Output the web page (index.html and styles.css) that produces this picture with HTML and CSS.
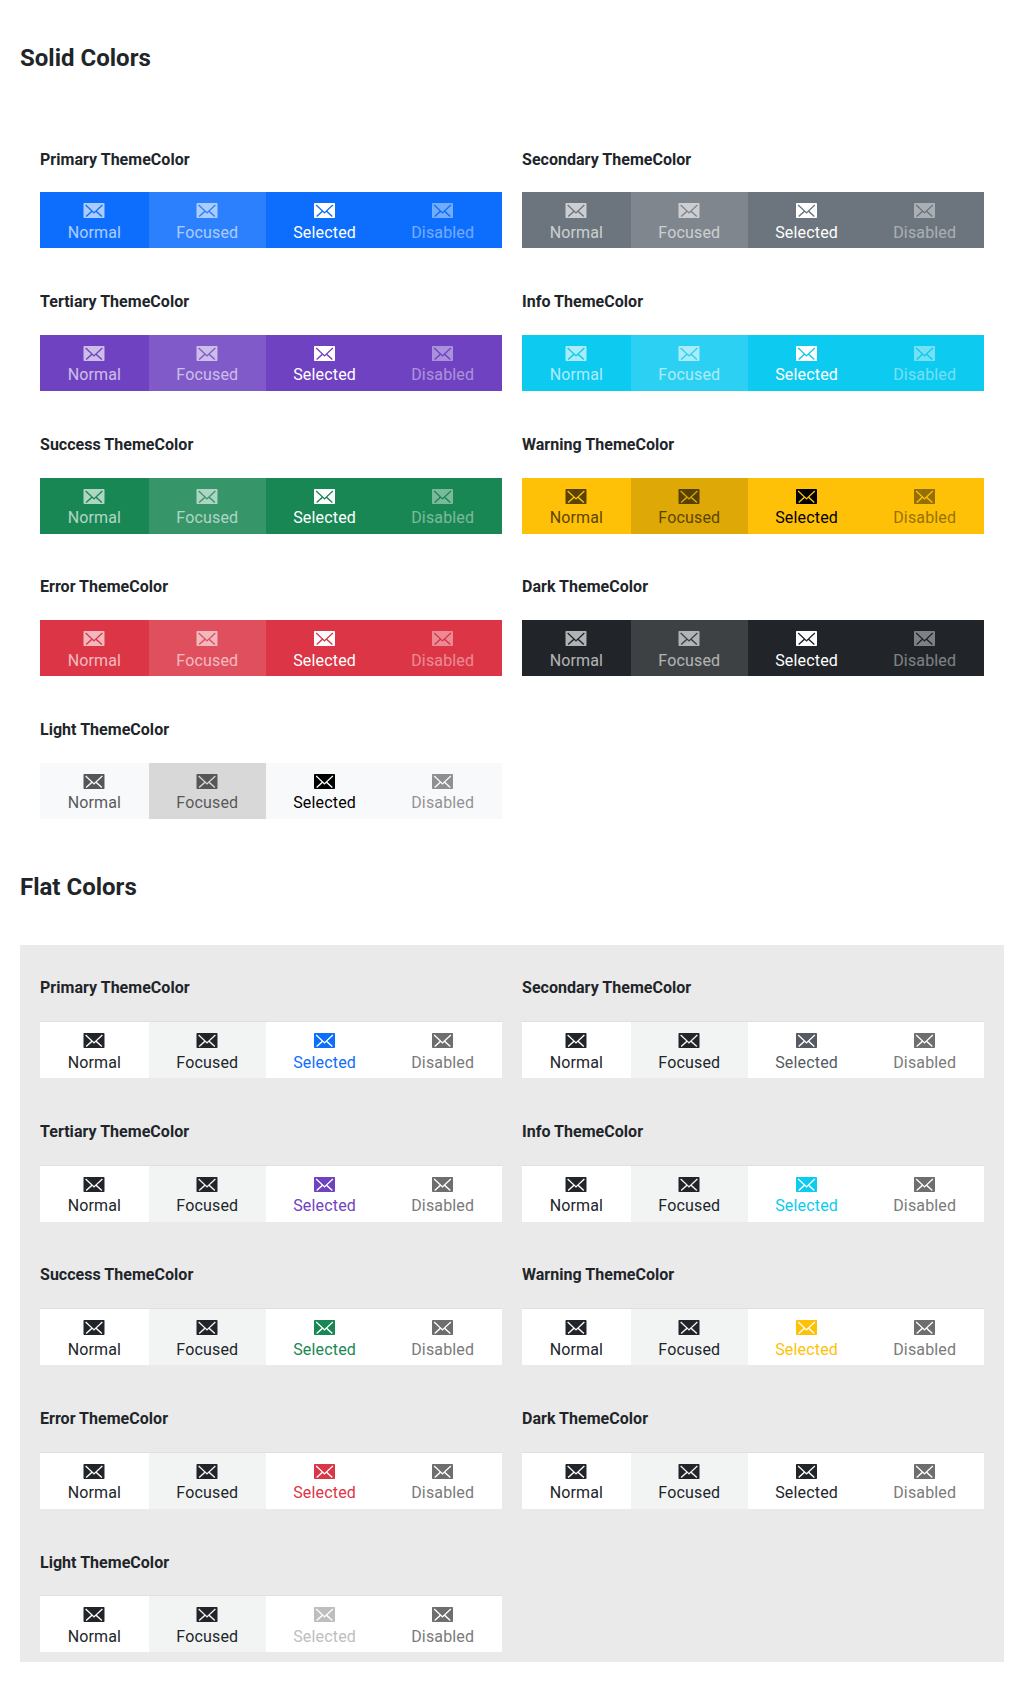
FILE: index.html
```html
<!DOCTYPE html>
<html lang="en">
<head>
<meta charset="utf-8">
<title>Bottom navigation</title>
<link rel="stylesheet" href="styles.css">
</head>
<body>
<h2 class="title">Solid Colors</h2>
<section class="grid solid"></section>
<h2 class="title">Flat Colors</h2>
<section class="grid flat"></section>
<script src="app.js"></script>
</body>
</html>
```
FILE: styles.css
```css
*{box-sizing:border-box}
body{margin:0;padding:44px 20px 0;background:#fff;color:#212529;font:16px/24px Roboto,sans-serif;height:1682px;overflow:hidden}
.title{margin:0;font-size:24px;line-height:28px;font-weight:700}
.grid{display:grid;grid-template-columns:462px 462px;column-gap:20px;padding:20px 20px 10px}
.solid{margin-top:45.6px;margin-bottom:43px;grid-template-rows:repeat(4,142.6px) 112px}
.flat{margin-top:44px;padding-top:21.2px;background:#eaeaea;grid-template-rows:repeat(4,143.6px) 111.4px}
.card{padding-top:10px}
.name{margin:0 0 20.8px;font-size:16px;line-height:24px;font-weight:700;letter-spacing:.03px}
.bar{display:flex;height:56px}
.flat .bar{height:57px;border-top:1px solid #dee0e0;background:#fff}
.item{flex:1 1 auto;display:flex;flex-direction:column;align-items:center;padding:8px 0 0;min-width:0}
.item.normal{flex:0 0 108.8px}
.item.focused{flex:0 0 117px}
.item.selected{flex:0 0 117.6px}
.icon{display:block;width:24px;height:20px;fill:currentColor}
.selected .icon,.disabled .icon{margin-left:.8px}
.selected path,.disabled path{transform:translateX(-.5px)}
.label{margin-top:.4px;line-height:24px;letter-spacing:.16px}
.flat .label{margin-top:.6px}

.solid .bar{background:var(--theme);color:#fff}
.solid .dark-text{color:#000}
.solid .normal>*{opacity:.65}
.solid .focused>*{opacity:.6}
.solid .disabled>*{opacity:.42}
.solid .focused{background:rgba(255,255,255,.13)}
.solid .dark-text .focused{background:rgba(0,0,0,.13)}

.flat .focused{background:#f2f4f4}
.flat .selected{color:var(--theme)}
.flat .disabled{color:#7a7a7a}
.flat .disabled .icon{color:#6e6e6e}
```
FILE: app.js
```js
const themes = [
  ['Primary', '#0d6efd'], ['Secondary', '#6c757d', '#545b62'], ['Tertiary', '#6f42c1'],
  ['Info', '#0dcaf0'], ['Success', '#198754'], ['Warning', '#ffc107'],
  ['Error', '#dc3545'], ['Dark', '#212529'], ['Light', '#f8f9fa', '#bebebe']
];
const states = ['Normal', 'Focused', 'Selected', 'Disabled'];
const icon = '<svg class="icon" viewBox="0 0 24 20"><path fill-rule="evenodd" d="M2.3 3h19.4q.8 0 .8.8v13.4q0 .8-.8.8H2.3q-.8 0-.8-.8V3.8q0-.8.8-.8ZM3.2 5.4l5.9 5.6-5.4 5 .9.9 5.6-5 1.8 1.9 1.8-1.9 5.6 5 .9-.9-5.4-5 5.9-5.6-.9-.9-7.9 7.5-7.9-7.5Z"/></svg>';

for (const grid of document.querySelectorAll('.grid')) {
  const flat = grid.classList.contains('flat');
  grid.innerHTML = themes.map(([name, color, flatColor]) => {
    const dark = name === 'Warning' || name === 'Light' ? ' dark-text' : '';
    const items = states.map(s => `<span class="item ${s.toLowerCase()}">${icon}<span class="label">${s}</span></span>`).join('');
    return `<div class="card"><h3 class="name">${name} ThemeColor</h3><nav class="bar${dark}" style="--theme:${flat && flatColor || color}">${items}</nav></div>`;
  }).join('');
}
```
